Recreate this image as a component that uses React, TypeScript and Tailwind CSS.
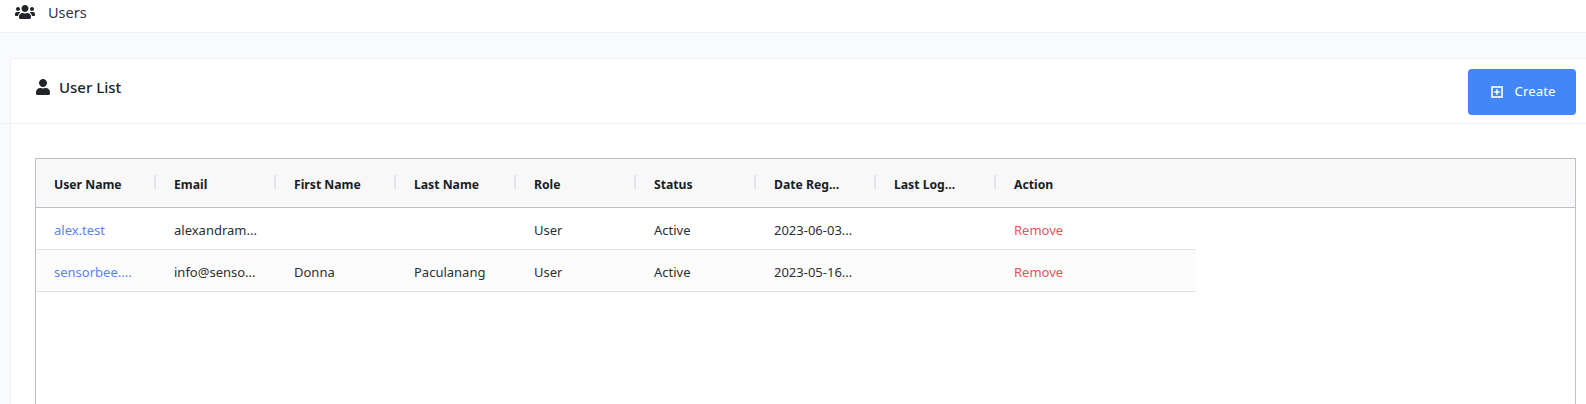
const columns = ["User Name", "Email", "First Name", "Last Name", "Role", "Status", "Date Reg...", "Last Log...", "Action"];

const rows = [
  ["alex.test", "alexandram...", "", "", "User", "Active", "2023-06-03...", "", "Remove"],
  ["sensorbee....", "info@senso...", "Donna", "Paculanang", "User", "Active", "2023-05-16...", "", "Remove"],
];

function UsersIcon() {
  return (
    <svg viewBox="0 0 640 512" className="w-[20px] h-[16px] fill-[#212529]">
      <path d="M96 224c35.300 0 64-28.700 64-64s-28.700-64-64-64-64 28.700-64 64 28.700 64 64 64zm448 0c35.300 0 64-28.700 64-64s-28.700-64-64-64-64 28.700-64 64 28.700 64 64 64zm32 32h-64c-17.600 0-33.500 7.100-45.100 18.600 40.300 22.100 68.900 62 75.100 109.400h66c17.700 0 32-14.300 32-32v-32c0-35.300-28.700-64-64-64zm-256 0c61.900 0 112-50.100 112-112S381.900 32 320 32 208 82.100 208 144s50.100 112 112 112zm76.800 32h-8.300c-20.800 10-43.900 16-68.500 16s-47.600-6-68.500-16h-8.300C179.600 288 128 339.600 128 403.200V432c0 26.500 21.500 48 48 48h288c26.500 0 48-21.500 48-48v-28.800c0-63.600-51.600-115.200-115.200-115.200zm-223.700-13.400C161.500 263.100 145.600 256 128 256H64c-35.300 0-64 28.700-64 64v32c0 17.700 14.300 32 32 32h65.900c6.300-47.400 34.900-87.300 75.200-109.400z" />
    </svg>
  );
}

function UserIcon() {
  return (
    <svg viewBox="0 0 448 512" className="w-[14px] h-[16px] fill-[#212529]">
      <path d="M224 256c70.700 0 128-57.300 128-128S294.700 0 224 0 96 57.300 96 128s57.300 128 128 128zm89.600 32h-16.700c-22.200 10.200-46.900 16-72.900 16s-50.600-5.800-72.900-16h-16.700C60.200 288 0 348.200 0 422.400V464c0 26.500 21.500 48 48 48h352c26.500 0 48-21.500 48-48v-41.600c0-74.200-60.200-134.400-134.400-134.400z" />
    </svg>
  );
}

function PlusBoxIcon() {
  return (
    <svg viewBox="0 0 12 12" className="w-[12px] h-[12px]">
      <rect x="1" y="1" width="10" height="10" fill="none" stroke="#dbe8fe" strokeWidth="2" />
      <path d="M6 3.200v5.600M3.200 6h5.600" stroke="#ffffff" strokeWidth="1.500" />
    </svg>
  );
}

export default function App() {
  return (
    <div className="h-[404px] overflow-hidden bg-[#f9fafc] font-['Noto_Sans',sans-serif] text-[#212529]">
      <div className="h-[33px] bg-white border-b border-[#eef0f6] flex items-start pt-[4px] pl-[15px] gap-[13px]">
        <UsersIcon />
        <span className="text-[14.500px] leading-[17px] text-[#2f3447]">Users</span>
      </div>

      <div className="h-[25px]" />

      <div className="ml-[10px] bg-white border-l border-t border-[#eef0f6] rounded-tl-[4px] h-[346px]">
        <div className="h-[65px] border-b border-[#eef0f6] -ml-[10px] pl-[35px] pr-[10px] flex items-start justify-between">
          <div className="flex items-center gap-[9px] pt-[18px]">
            <UserIcon />
            <span className="text-[15px] leading-[20px] font-medium text-[#212529]">User List</span>
          </div>
          <button className="mt-[10px] w-[108px] h-[46px] pl-[2px] rounded-[4px] bg-[#4287f5] text-white text-[13.300px] flex items-center justify-center gap-[12px]">
            <PlusBoxIcon />
            Create
          </button>
        </div>

        <div className="ml-[24px] mr-[10px] mt-[34px] border border-[#babfc7] h-[300px]">
          <div className="h-[49px] pt-[5px] bg-[#f8f8f8] border-b border-[#babfc7] flex items-center">
            {columns.map((c, i) => (
              <div key={c} className="w-[120px] shrink-0 pl-[18px] relative text-[12.200px] font-bold text-[#181d1f]">
                {c}
                {i < columns.length - 1 && (
                  <span className="absolute right-[0px] top-[-1px] h-[14px] w-[2px] bg-[#dfe3ec]" />
                )}
              </div>
            ))}
          </div>

          {rows.map((row, r) => (
            <div
              key={r}
              className={`w-[1160px] h-[42px] pt-[5px] border-b border-[#dde2eb] flex items-center ${r === 1 ? "bg-[#fcfcfc]" : "bg-white"}`}
            >
              {row.map((cell, i) => (
                <div
                  key={i}
                  className={`w-[120px] shrink-0 pl-[18px] text-[13px] whitespace-nowrap ${i === 0 ? "text-[#5b82f6]" : i === 8 ? "text-[#e2555a]" : "text-[#2a2f33]"}`}
                >
                  {cell}
                </div>
              ))}
            </div>
          ))}
        </div>
      </div>
    </div>
  );
}
